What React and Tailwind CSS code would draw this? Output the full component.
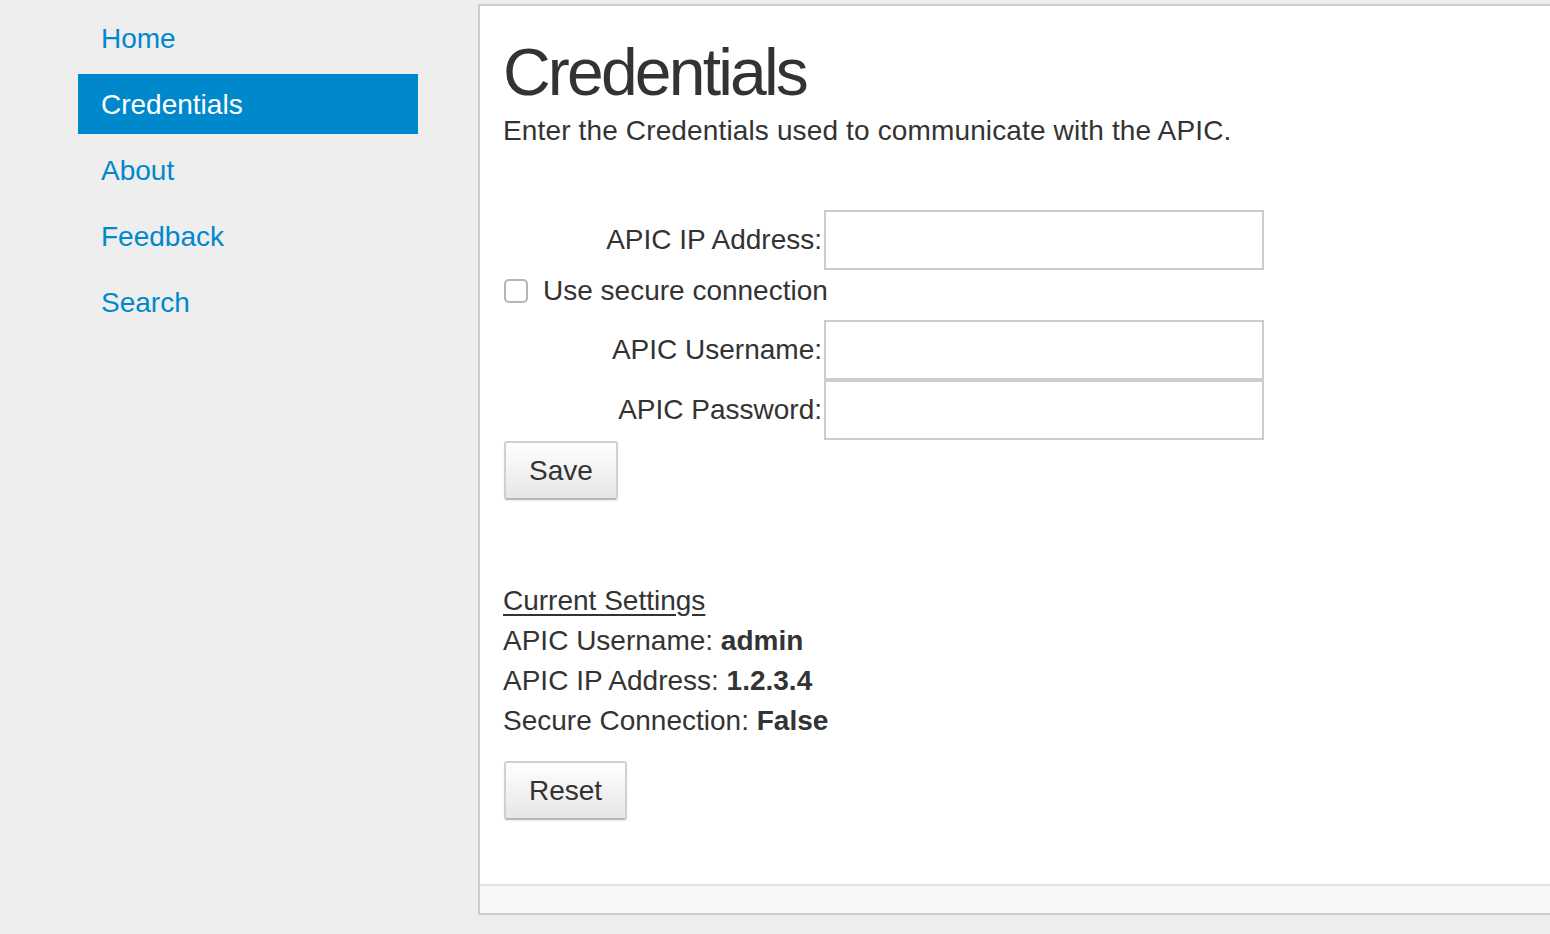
import React from "react";

const navItems = ["Home", "Credentials", "About", "Feedback", "Search"];

const Field = ({ label }) => (
  <div className="flex items-center">
    <label className="w-[319px] text-right">{label}</label>
    <input
      type="text"
      className="ml-[2px] w-[440px] h-[60px] border-2 border-[#cccccc] bg-white outline-none"
    />
  </div>
);

const Button = ({ children }) => (
  <button className="h-[59px] px-[23px] ml-[1px] border-2 border-[#d0d0d0] border-b-[#b8b8b8] rounded-[3px] bg-gradient-to-b from-white to-[#e6e6e6] text-[28px] text-[#333333] shadow-[0_1px_2px_rgba(0,0,0,0.08)]">
    {children}
  </button>
);

export default function App() {
  return (
    <div
      className="min-h-[934px] bg-[#eeeeee] flex text-[#333333] overflow-hidden"
      style={{ fontFamily: '"Liberation Sans", Arial, sans-serif' }}
    >
      <nav className="w-[478px] shrink-0 pl-[78px] pt-[8px]">
        <ul className="w-[340px] flex flex-col gap-[6px]">
          {navItems.map((item) => (
            <li
              key={item}
              className={`h-[60px] flex items-center pl-[23px] pt-[1px] text-[28px] ${
                item === "Credentials"
                  ? "bg-[#0088cc] text-white"
                  : "text-[#0088cc]"
              }`}
            >
              {item}
            </li>
          ))}
        </ul>
      </nav>

      <main className="flex-1 mt-[4px] mb-[19px] min-w-[1100px] bg-white border-l-2 border-t-2 border-b-2 border-[#cccccc] flex flex-col">
        <div className="flex-1 pl-[23px]">
          <h1 className="mt-[33px] text-[66px] leading-[66px] tracking-[-2.8px] font-normal text-[#333333]">
            Credentials
          </h1>
          <p className="mt-[6px] text-[28px] leading-[40px] tracking-[0.14px]">
            Enter the Credentials used to communicate with the APIC.
          </p>

          <form className="mt-[59px] text-[28px]">
            <Field label="APIC IP Address:" />
            <div className="flex items-center h-[50px] pb-[8px]">
              <input
                type="checkbox"
                className="appearance-none ml-[1px] w-[24px] h-[24px] border-2 border-[#b5b5b5] rounded-[5px] bg-white"
              />
              <span className="ml-[15px]">Use secure connection</span>
            </div>
            <div>
              <Field label="APIC Username:" />
              <Field label="APIC Password:" />
            </div>
            <div className="mt-[1px]">
              <Button>Save</Button>
            </div>
          </form>

          <div className="mt-[81px] text-[28px] leading-[40px]">
            <div className="underline underline-offset-[4px]">Current Settings</div>
            <div>
              APIC Username: <b>admin</b>
            </div>
            <div>
              APIC IP Address: <b>1.2.3.4</b>
            </div>
            <div>
              Secure Connection: <b>False</b>
            </div>
            <div className="mt-[20px]">
              <Button>Reset</Button>
            </div>
          </div>
        </div>
        <div className="h-[29px] bg-[#f8f8f8] border-t-2 border-[#e5e5e5]" />
      </main>
    </div>
  );
}
